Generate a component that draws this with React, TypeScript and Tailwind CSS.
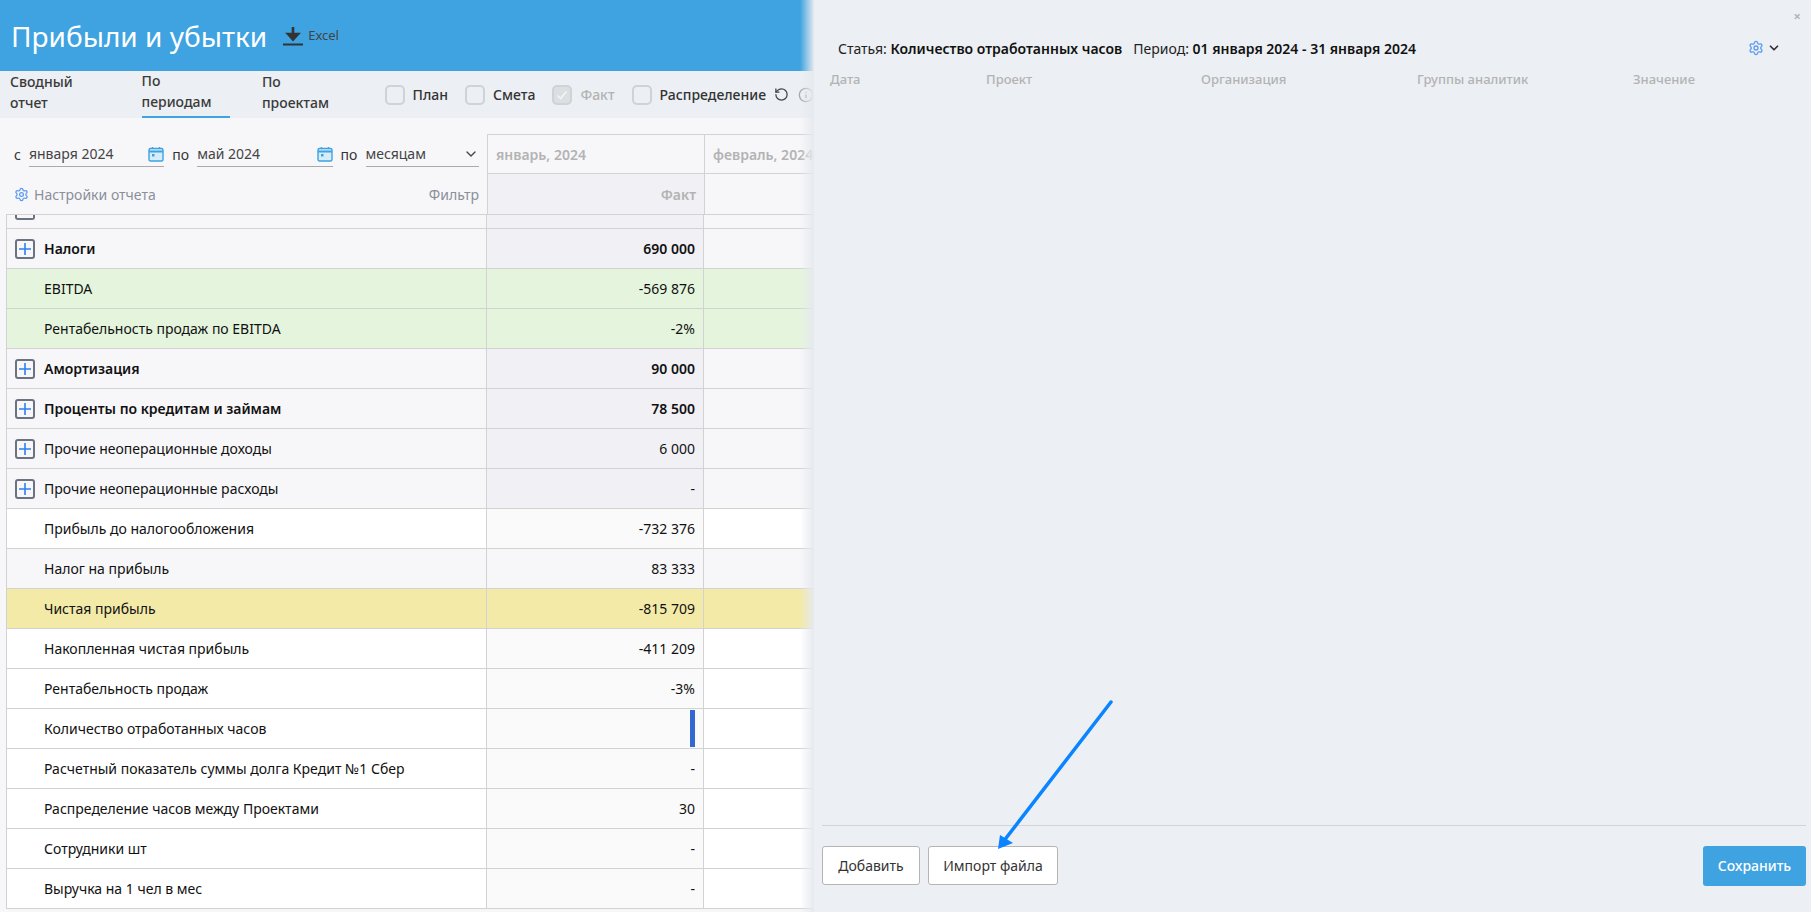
import React from 'react';
import { ChevronDown, Info, RotateCcw, Settings } from 'lucide-react';

type RowKind = 'group' | 'plain' | 'gray' | 'green' | 'yellow';

interface Row {
  label: string;
  value: string;
  kind: RowKind;
  expand?: boolean;
  bold?: boolean;
  cursor?: boolean;
}

const rows: Row[] = [
  { label: 'Налоги', value: '690 000', kind: 'group', expand: true, bold: true },
  { label: 'EBITDA', value: '-569 876', kind: 'green' },
  { label: 'Рентабельность продаж по EBITDA', value: '-2%', kind: 'green' },
  { label: 'Амортизация', value: '90 000', kind: 'group', expand: true, bold: true },
  { label: 'Проценты по кредитам и займам', value: '78 500', kind: 'group', expand: true, bold: true },
  { label: 'Прочие неоперационные доходы', value: '6 000', kind: 'group', expand: true },
  { label: 'Прочие неоперационные расходы', value: '-', kind: 'group', expand: true },
  { label: 'Прибыль до налогообложения', value: '-732 376', kind: 'plain' },
  { label: 'Налог на прибыль', value: '83 333', kind: 'gray' },
  { label: 'Чистая прибыль', value: '-815 709', kind: 'yellow' },
  { label: 'Накопленная чистая прибыль', value: '-411 209', kind: 'plain' },
  { label: 'Рентабельность продаж', value: '-3%', kind: 'plain' },
  { label: 'Количество отработанных часов', value: '-', kind: 'plain', cursor: true },
  { label: 'Расчетный показатель суммы долга Кредит №1 Сбер', value: '-', kind: 'plain' },
  { label: 'Распределение часов между Проектами', value: '30', kind: 'plain' },
  { label: 'Сотрудники шт', value: '-', kind: 'plain' },
  { label: 'Выручка на 1 чел в мес', value: '-', kind: 'plain' },
];

const rowBg: Record<RowKind, string> = {
  group: 'bg-[#f7f7fa]',
  plain: 'bg-white',
  gray: 'bg-[#f7f7fa]',
  green: 'bg-[#e5f5dd]',
  yellow: 'bg-[#f3eaa8]',
};

const valueBg: Record<RowKind, string> = {
  group: 'bg-[#f0f0f5]',
  plain: 'bg-[#fafafa]',
  gray: 'bg-[#f7f7fa]',
  green: 'bg-[#e5f5dd]',
  yellow: 'bg-[#f3eaa8]',
};

const ExpandIcon = () => (
  <span className="w-5 h-5 shrink-0 rounded-[3px] border-2 border-[#6b7280] flex items-center justify-center">
    <svg width="14" height="14" viewBox="0 0 14 14">
      <path d="M7 1v12M1 7h12" stroke="#2f80ed" strokeWidth="1.6" />
    </svg>
  </span>
);

const CalendarIcon = () => (
  <svg width="16" height="16" viewBox="0 0 16 16" className="shrink-0">
    <rect x="1" y="2.5" width="14" height="12.5" rx="1.5" fill="#d6ecf9" stroke="#3ea3e0" strokeWidth="1.4" />
    <path d="M1 5.5h14" stroke="#3ea3e0" strokeWidth="2" />
    <path d="M4.5 1v2M11.5 1v2" stroke="#3ea3e0" strokeWidth="1.4" />
    <rect x="4" y="8" width="2.5" height="2.5" fill="#3ea3e0" />
  </svg>
);

const Check = ({ label, disabled }: { label: string; disabled?: boolean }) => (
  <div className="flex items-center gap-[8px]">
    <span
      className={`w-5 h-5 rounded-[5px] border-2 border-[#cfd2d6] flex items-center justify-center ${disabled ? 'bg-[#dcdee1]' : ''}`}
    >
      {disabled && (
        <svg width="12" height="12" viewBox="0 0 12 12">
          <path d="M1.5 6.5l3 3 6-7" stroke="#f5f5f5" strokeWidth="1.6" fill="none" />
        </svg>
      )}
    </span>
    <span className={`text-[14px] ${disabled ? 'text-[#b3b3b3]' : 'text-[#333]'}`}>{label}</span>
  </div>
);

const Field = ({ text, width }: { text: string; width: string }) => (
  <div className={`flex items-center justify-between h-[26px] border-b border-[#aaa] text-[14px] text-[#444] ${width}`}>
    <span>{text}</span>
  </div>
);

const ReportPanel = () => (
  <div className="relative w-[814px] shrink-0 h-full overflow-hidden bg-[#f7f7fa]">
    <header className="h-[71px] bg-[#3ea3e0] flex items-center pl-[11px]">
      <h1 className="text-[28px] text-white leading-none">Прибыли и убытки</h1>
      <svg width="20" height="20" viewBox="0 0 20 20" className="ml-[16px]">
        <path d="M10 1v11M5 8l5 5.5L15 8z" stroke="#333" strokeWidth="2.6" fill="#333" />
        <path d="M0 18.5h20" stroke="#333" strokeWidth="2" />
      </svg>
      <span className="ml-[5px] text-[13px] text-[#444]">Excel</span>
    </header>

    <nav className="h-[47px] bg-[#eceff3] flex items-stretch pl-[10px] text-[14px] font-medium text-[#3a3a3a]">
      <a className="flex items-center pb-[6px]">Сводный отчет</a>
      <a className="flex items-center pb-[6px] ml-[32px] border-b-2 border-[#3ea3e0]">По периодам</a>
      <a className="flex items-center pb-[6px] ml-[32px]">По проектам</a>
      <div className="flex items-center gap-[17px] ml-[37px]">
        <Check label="План" />
        <Check label="Смета" />
        <Check label="Факт" disabled />
        <Check label="Распределение" />
      </div>
      <div className="flex items-center gap-[9px] ml-[8px]">
        <RotateCcw size={15} className="text-[#444]" />
        <Info size={16} className="text-[#aaa]" />
      </div>
    </nav>

    <div className="flex h-[96px] pt-[16px] pl-[6px]">
      <div className="w-[481px] shrink-0 pr-[8px]">
        <div className="flex items-center h-[40px] pl-[8px] text-[14px] text-[#333]">
          <span className="w-[15px]">с</span>
          <Field text="января 2024" width="w-[136px]" />
          <span className="ml-[-16px]"><CalendarIcon /></span>
          <span className="ml-[8px] w-[25px]">по</span>
          <Field text="май 2024" width="w-[136px]" />
          <span className="ml-[-16px]"><CalendarIcon /></span>
          <span className="ml-[8px] w-[25px]">по</span>
          <div className="flex items-center justify-between h-[26px] w-[114px] border-b border-[#aaa] text-[#444]">
            <span>месяцам</span>
            <ChevronDown size={16} className="text-[#444]" />
          </div>
        </div>
        <div className="flex items-center justify-between h-[40px] pl-[8px] text-[14px]">
          <div className="flex items-center gap-[5px] text-[#8a8f99]">
            <Settings size={15} className="text-[#5b9bf0]" />
            <span>Настройки отчета</span>
          </div>
          <span className="text-[#8a8f99]">Фильтр</span>
        </div>
      </div>
      <div className="flex-1 text-[14px] font-semibold text-[#b3b3b3]">
        <div className="flex h-[40px] border-t border-l border-[#d2d2d2]">
          <div className="w-[217px] shrink-0 flex items-center pl-[8px] border-r border-b border-[#d2d2d2]">январь, 2024</div>
          <div className="flex-1 flex items-center pl-[8px] border-b border-[#d2d2d2] whitespace-nowrap">февраль, 2024</div>
        </div>
        <div className="flex h-[40px] border-l border-[#d2d2d2]">
          <div className="w-[217px] shrink-0 flex items-center justify-end pr-[8px] bg-[#f0f0f5] border-r border-[#d2d2d2]">Факт</div>
        </div>
      </div>
    </div>

    <div className="ml-[6px]">
      <div className="flex h-[14px] border-t border-[#d2d2d2] overflow-hidden">
        <div className="w-[481px] shrink-0 border-x border-[#d2d2d2] pl-[8px]">
          <span className="block w-5 h-[5px] border-x-2 border-b-2 border-[#6b7280] rounded-b-[3px]" />
        </div>
        <div className="w-[217px] shrink-0 bg-[#f0f0f5] border-r border-[#d2d2d2]" />
      </div>
      {rows.map((row) => (
        <div key={row.label} className={`flex h-[40px] border-t border-[#d2d2d2] text-[14px] text-[#111] ${row.bold ? 'font-semibold' : ''}`}>
          <div className={`w-[481px] shrink-0 flex items-center border-x border-[#d2d2d2] ${rowBg[row.kind]}`}>
            <span className="w-[37px] shrink-0 pl-[8px]">{row.expand && <ExpandIcon />}</span>
            <span>{row.label}</span>
          </div>
          <div className={`w-[217px] shrink-0 flex items-center justify-end pr-[8px] border-r border-[#d2d2d2] ${valueBg[row.kind]}`}>
            {row.cursor ? <span className="w-[5px] h-full py-px"><span className="block h-full bg-[#3367d1]" /></span> : row.value}
          </div>
          <div className={`flex-1 ${row.kind === 'plain' ? 'bg-white' : rowBg[row.kind]}`} />
        </div>
      ))}
      <div className="h-px bg-[#d2d2d2]" />
    </div>

    <div className="absolute top-0 right-0 bottom-0 w-[14px] bg-gradient-to-r from-transparent to-[#e6e9ee]" />
  </div>
);

const DetailPanel = () => (
  <aside className="relative flex-1 h-full flex flex-col bg-[#eceff3]">
    <span className="absolute top-[10px] right-[10px] text-[13px] leading-none font-bold text-[#b5b5b5]">×</span>
    <div className="flex items-center justify-between h-[48px] mt-[24px] pl-[24px] pr-[30px] text-[14px] text-[#222]">
      <p className="whitespace-nowrap">
        Статья: <b className="font-semibold text-[#111]">Количество отработанных часов</b>
        <span className="ml-[11px]">Период: </span>
        <b className="font-semibold text-[#111]">01 января 2024 - 31 января 2024</b>
      </p>
      <div className="flex items-center gap-[3px]">
        <Settings size={16} className="text-[#5b9bf0]" />
        <ChevronDown size={14} strokeWidth={3} className="text-[#333]" />
      </div>
    </div>
    <div className="flex pl-[16px] h-[16px] items-center text-[13px] font-medium text-[#b3b3b3]">
      <span className="w-[156px]">Дата</span>
      <span className="w-[215px]">Проект</span>
      <span className="w-[216px]">Организация</span>
      <span className="w-[216px]">Группы аналитик</span>
      <span>Значение</span>
    </div>
    <div className="flex-1" />
    <div className="mx-[8px] mr-[5px] border-t border-[#d2d4d8] flex items-center justify-between h-[87px] pb-[7px] text-[14px]">
      <div className="flex gap-[8px]">
        <button className="w-[98px] h-[39px] bg-white border border-[#b5b5b5] rounded-[3px] text-[#333]">Добавить</button>
        <button className="w-[130px] h-[39px] bg-white border border-[#b5b5b5] rounded-[3px] text-[#333]">Импорт файла</button>
      </div>
      <button className="w-[103px] h-[40px] bg-[#3ea3e0] rounded-[3px] text-white font-medium">Сохранить</button>
    </div>
  </aside>
);

export default function App() {
  return (
    <div className="relative flex w-[1811px] h-[912px] overflow-hidden font-['Noto_Sans',sans-serif]">
      <ReportPanel />
      <DetailPanel />
      <svg className="absolute top-0 left-0 pointer-events-none" width="1811" height="912">
        <path d="M1111 702L1003 842" stroke="#0a84ff" strokeWidth="3.5" strokeLinecap="round" />
        <path d="M998 849l2-14 13 8z" fill="#0a84ff" />
      </svg>
    </div>
  );
}
